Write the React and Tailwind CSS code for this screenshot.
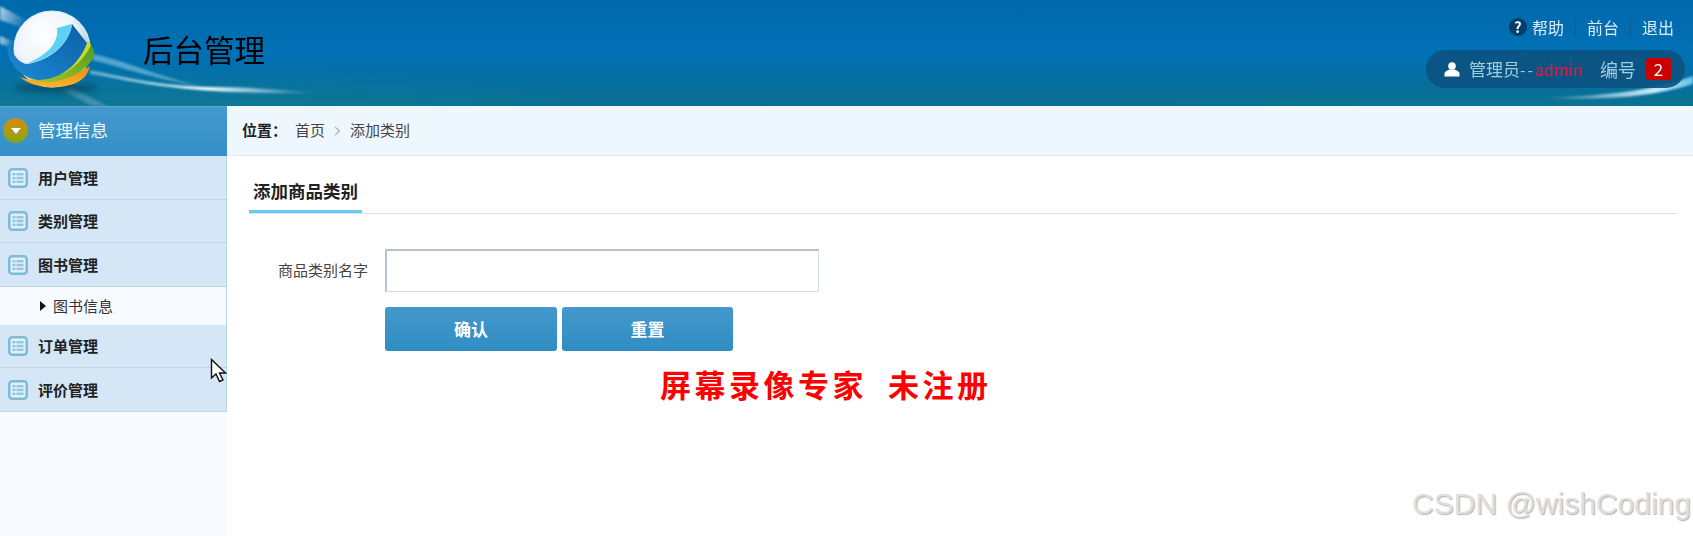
import React from "react";

const menuItems = ["用户管理", "类别管理", "图书管理"];
const menuItemsAfter = ["订单管理", "评价管理"];

const ListIcon = () => (
  <svg width="20" height="20" viewBox="0 0 20 20" className="shrink-0">
    <rect x="1.25" y="1.25" width="17.5" height="17.5" rx="3" fill="#e2eff9" stroke="#7dbbdb" strokeWidth="2.5" />
    <g fill="#93c6e2">
      <rect x="4.5" y="5" width="3" height="2.4" />
      <rect x="8.5" y="5" width="7" height="2.4" />
      <rect x="4.5" y="8.8" width="3" height="2.4" />
      <rect x="8.5" y="8.8" width="7" height="2.4" />
      <rect x="4.5" y="12.6" width="3" height="2.4" />
      <rect x="8.5" y="12.6" width="7" height="2.4" />
    </g>
  </svg>
);

const HeaderArt = () => (
  <svg className="absolute inset-0 pointer-events-none" width="1693" height="106" viewBox="0 0 1693 106">
    <defs>
      <filter id="soft" x="-10%" y="-60%" width="120%" height="220%">
        <feGaussianBlur stdDeviation="1.2" />
      </filter>
      <filter id="softer" x="-20%" y="-100%" width="140%" height="300%">
        <feGaussianBlur stdDeviation="3" />
      </filter>
      <radialGradient id="teal" cx="0.5" cy="1" r="0.8">
        <stop offset="0" stopColor="#1a8a9c" stopOpacity="0.9" />
        <stop offset="1" stopColor="#1a8a9c" stopOpacity="0" />
      </radialGradient>
      <linearGradient id="glow" x1="0" x2="1" y1="0" y2="0">
        <stop offset="0" stopColor="#9fdcf2" stopOpacity="0.55" />
        <stop offset="0.5" stopColor="#f4fcff" stopOpacity="1" />
        <stop offset="1" stopColor="#bfeaf8" stopOpacity="0" />
      </linearGradient>
      <linearGradient id="glowRight" x1="0" x2="1" y1="0" y2="0">
        <stop offset="0" stopColor="#fff" stopOpacity="0" />
        <stop offset="0.75" stopColor="#d5f3ff" stopOpacity="0.95" />
        <stop offset="1" stopColor="#6fcdec" stopOpacity="0.9" />
      </linearGradient>
      <linearGradient id="beam" x1="0" x2="1" y1="0" y2="0.4">
        <stop offset="0" stopColor="#fff" stopOpacity="0.7" />
        <stop offset="1" stopColor="#fff" stopOpacity="0.1" />
      </linearGradient>
      <linearGradient id="orange" x1="0" x2="0" y1="0" y2="1">
        <stop offset="0" stopColor="#e98a0e" />
        <stop offset="1" stopColor="#fdb52c" />
      </linearGradient>
      <linearGradient id="green" x1="1" x2="0" y1="0" y2="1">
        <stop offset="0" stopColor="#4f9a1c" />
        <stop offset="1" stopColor="#a6c92c" />
      </linearGradient>
      <radialGradient id="globe" cx="0.38" cy="0.3" r="0.75">
        <stop offset="0" stopColor="#ffffff" />
        <stop offset="0.55" stopColor="#eef4f9" />
        <stop offset="1" stopColor="#9cbdd4" />
      </radialGradient>
      <linearGradient id="ring" x1="0" x2="1" y1="1" y2="0">
        <stop offset="0" stopColor="#1c8ad0" />
        <stop offset="1" stopColor="#0b5fa8" />
      </linearGradient>
    </defs>
    <ellipse cx="130" cy="110" rx="440" ry="75" fill="url(#teal)" />
    <ellipse cx="1500" cy="120" rx="560" ry="50" fill="url(#teal)" />
    {/* light beams */}
    <g filter="url(#soft)">
      <path d="M0 6 L26 20 L20 27 L0 20 Z" fill="url(#beam)" />
      <path d="M0 36 L14 42 L12 48 L0 44 Z" fill="url(#beam)" />
      <path d="M72 88 L108 106 L92 106 L62 90 Z" fill="#fff" opacity="0.2" />
      <path d="M93 54 C130 62 150 74 200 86 C150 78 125 68 92 60 Z" fill="#9fdcf2" opacity="0.5" />
      <path d="M90 70 C130 78 160 86 210 87 C250 87 280 90 320 93 C260 94 210 92 170 87 C140 84 115 78 90 74 Z" fill="url(#glow)" />
      <path d="M1540 98 C1600 96 1650 92 1693 76 L1693 84 C1650 98 1600 100 1540 98 Z" fill="url(#glowRight)" />
    </g>
    {/* logo */}
    <ellipse cx="56" cy="88" rx="42" ry="5" fill="#04394f" opacity="0.55" filter="url(#softer)" />
    <circle cx="52" cy="49" r="38" fill="url(#globe)" stroke="#e4eef5" strokeWidth="1.2" />
    <path d="M20 77 C40 84 70 80 90 66 C88 75 82 82 70 85 C50 90 30 86 20 77 Z" fill="url(#orange)" />
    <path d="M87 43 L89 42 C93 47 95 52 94 56 C88 70 70 80 50 82 C40 82 32 80 27 77 C52 80 76 66 87 43 Z" fill="url(#green)" />
    <path d="M86 44 L89 41 L91 45 C84 60 72 70 60 75 C72 66 80 56 86 44 Z" fill="#c9d92e" />
    <path d="M7 48 C9 66 21 77 38 80 C60 80 79 65 87 43 L72 24 C70 42 52 60 28 64 C20 64 12 56 10 42 Z" fill="url(#ring)" />
    <path d="M57 28 L72 24 C70 42 52 60 26 64 C44 56 59 46 57 28 Z" fill="#5fd0f5" />
  </svg>
);

export default function App() {
  return (
    <div
      className="relative h-[536px] w-[1693px] overflow-hidden bg-white text-[15px] text-[#333]"
      style={{ fontFamily: '"Noto Sans CJK SC", "Liberation Sans", sans-serif' }}
    >
      {/* top banner */}
      <header className="relative flex h-[106px] items-start justify-between bg-gradient-to-b from-[#0069ab] via-[#0170b5] to-[#0b6e90]">
        <HeaderArt />
        <h1 className="relative ml-[143px] mt-[29px] text-[30.5px] leading-[40px] font-normal text-black">后台管理</h1>
        <div className="relative mr-2 flex flex-col items-end">
          <div className="mt-[17px] mr-[11px] flex h-[20px] items-center text-[16px] leading-[20px] text-[#dcebf6]">
            <span className="mr-[5px] flex h-[18px] w-[18px] items-center justify-center rounded-full bg-[#073d67] text-[15px] font-bold text-white">?</span>
            <span>帮助</span>
            <span className="mx-[11px] h-[15px] border-l border-dotted border-[#0c4a78]" />
            <span>前台</span>
            <span className="mx-[11px] h-[15px] border-l border-dotted border-[#0c4a78]" />
            <span>退出</span>
          </div>
          <div className="mt-[13px] flex h-[38px] w-[259px] items-center rounded-[19px] bg-[#0b527f]/90 pl-[18px] text-[16px] text-[#a5cde0]">
            <svg width="16" height="16" viewBox="0 0 16 16" className="mr-[9px] shrink-0">
              <circle cx="8" cy="5" r="3.8" fill="#fff" />
              <path d="M0.5 15.5 V12.5 C0.5 10.5 3 9.5 5.5 8.5 H10.5 C13 9.5 15.5 10.5 15.5 12.5 V15.5 Z" fill="#fff" />
            </svg>
            <span className="text-[17px]">管理员</span>
            <span className="tracking-[2px]">--</span>
            <span className="text-[#f5143a]">admin</span>
            <span className="ml-[17px] text-[18px]">编号</span>
            <span className="ml-[10px] flex h-[22px] w-[25px] items-center justify-center rounded-[3px] bg-[#cc0000] text-[17px] text-white">2</span>
          </div>
        </div>
      </header>

      <div className="flex h-[430px]">
        {/* sidebar */}
        <aside className="flex w-[227px] shrink-0 flex-col bg-[#f7fbff]">
          <div className="flex h-[50px] items-center border-t border-[#5aa8d8] bg-gradient-to-b from-[#4398cf] to-[#3390c6] pb-[2px] pl-[3px] text-[17.5px] font-normal text-[#f2f8fc]">
            <span className="mr-[10px] flex h-[25px] w-[25px] items-center justify-center rounded-full bg-gradient-to-b from-[#d58a0c] to-[#84a514]">
              <svg width="10" height="6" viewBox="0 0 10 6">
                <path d="M0 0 H10 L5 6 Z" fill="#fff" />
              </svg>
            </span>
            管理信息
          </div>
          {menuItems.map((name) => (
            <div key={name} className="flex h-[43.5px] items-center border-r border-b border-[#c3d3e0] border-r-[#b9d7e6] bg-[#d5e6f6] pl-[8px] pt-[1px] font-bold text-[#222]">
              <ListIcon />
              <span className="ml-[10px]">{name}</span>
            </div>
          ))}
          <div className="flex h-[38px] items-center border-r border-[#b9d7e6] bg-[#f7fbff] pl-[40px] pt-[1px] text-[#333]">
            <svg width="6" height="10" viewBox="0 0 6 10" className="mr-[7px]">
              <path d="M0 0 L6 5 L0 10 Z" fill="#111" />
            </svg>
            图书信息
          </div>
          {menuItemsAfter.map((name) => (
            <div key={name} className="flex h-[43.5px] items-center border-r border-b border-[#c3d3e0] border-r-[#b9d7e6] bg-[#d5e6f6] pl-[8px] pt-[1px] font-bold text-[#222]">
              <ListIcon />
              <span className="ml-[10px]">{name}</span>
            </div>
          ))}
        </aside>

        {/* main */}
        <main className="min-w-0 flex-1">
          <div className="flex h-[50px] items-center border-b border-[#dfe9f2] bg-[#eff7fe] pl-[15px] text-[#444]">
            <span className="font-bold text-[#222]">位置：</span>
            <span className="ml-[8px]">首页</span>
            <svg width="7" height="10" viewBox="0 0 7 10" className="mx-[9px]">
              <path d="M1 1 L5.5 5 L1 9" fill="none" stroke="#aab4bc" strokeWidth="1.3" />
            </svg>
            <span>添加类别</span>
          </div>

          <div className="ml-[22px] mr-[15px] mt-[18px] border-b border-[#d8e2ec]">
            <div className="h-[39px] w-[113px] border-b-[3px] border-[#66c9f8] pl-[4px] text-[17.5px] leading-[33px] font-bold text-[#222]">
              添加商品类别
            </div>
          </div>

          <form className="mt-[35px] flex flex-col gap-[15px]">
            <div className="flex items-center">
              <label className="w-[141px] text-right text-[#444]">商品类别名字</label>
              <input
                type="text"
                className="ml-[17px] h-[43px] w-[434px] border border-t-2 border-l-2 border-[#d3dfe6] border-t-[#b4c3cf] border-l-[#b4c3cf] bg-white"
              />
            </div>
            <div className="ml-[158px] flex gap-[5px]">
              <button type="button" className="h-[44px] w-[172px] rounded-[3px] bg-gradient-to-b from-[#4498cd] to-[#2f8dc3] text-[17px] font-bold text-white">确认</button>
              <button type="button" className="h-[44px] w-[171px] rounded-[3px] bg-gradient-to-b from-[#4498cd] to-[#2f8dc3] text-[17px] font-bold text-white">重置</button>
            </div>
          </form>
        </main>
      </div>

      {/* recorder stamp, watermark and mouse pointer lie over the page */}
      <div className="absolute left-[660px] top-[364px] whitespace-pre text-[31px] leading-[40px] font-bold tracking-[3.5px] text-[#ff0000]">
        屏幕录像专家  未注册
      </div>
      <div
        className="absolute right-[2px] top-[486px] text-[30px] leading-[36px] text-[#dedede] [text-shadow:1px_1px_1px_#b4b4b4]"
        style={{ fontFamily: '"Liberation Sans", sans-serif' }}
      >
        CSDN @wishCoding
      </div>
      <svg className="absolute left-[210px] top-[358px]" width="17" height="26" viewBox="0 0 17 26">
        <path d="M1.5 1.5 V20 L6 16 L9.5 23.5 L13 22 L9.5 15 H15.5 Z" fill="#fff" stroke="#111" strokeWidth="1.4" />
      </svg>
    </div>
  );
}
